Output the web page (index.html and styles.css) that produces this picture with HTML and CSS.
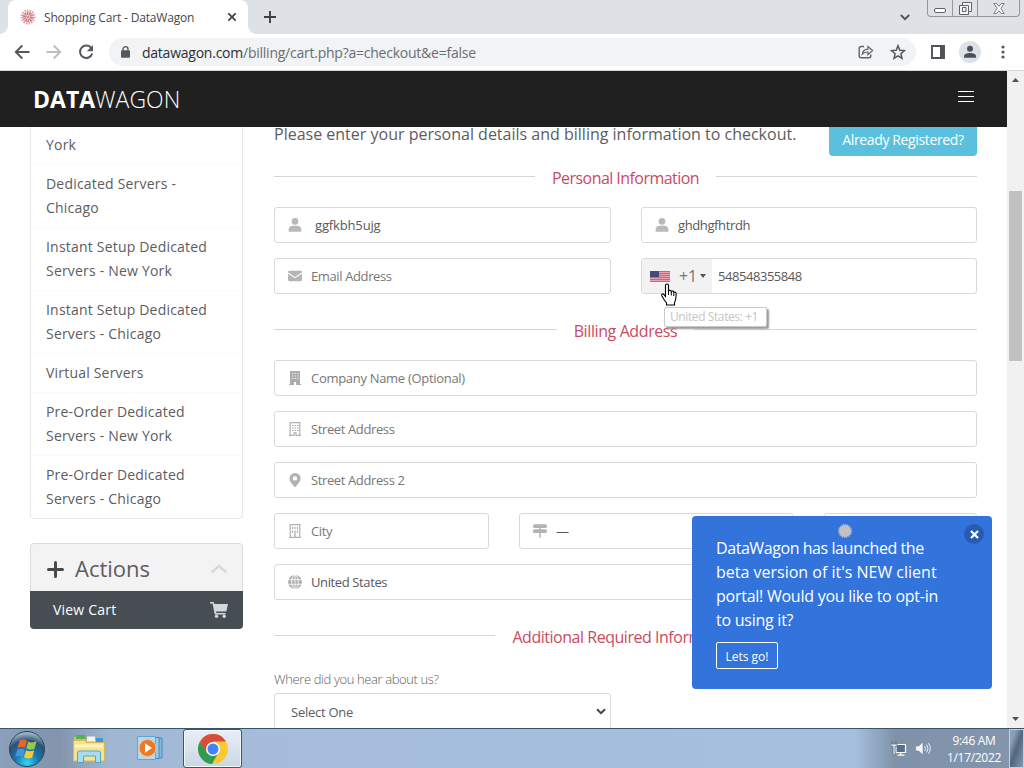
FILE: index.html
```html
<!DOCTYPE html>
<html lang="en">
<head>
    <meta charset="utf-8">
    <title>Shopping Cart - DataWagon</title>
    <link rel="stylesheet" href="styles.css">
</head>
<body>
    <div class="tabs">
        <div class="tab">
            <svg class="favicon" width="16" height="16" viewBox="0 0 16 16">
                <circle cx="8" cy="8" r="6.2" fill="none" stroke="#e3a0a6" stroke-width="2.6" stroke-dasharray="1.5 1"/>
                <circle cx="8" cy="8" r="3.6" fill="none" stroke="#d3737e" stroke-width="3" stroke-dasharray="1.6 .6"/>
                <circle cx="8" cy="8" r="1.8" fill="#dc8c95"/>
            </svg>
            <span class="tab-title">Shopping Cart - DataWagon</span>
            <svg class="tab-close" width="10" height="10" viewBox="0 0 10 10"><path d="M1.3 1.3l7.4 7.4M8.7 1.3L1.3 8.7" stroke="#3c4043" stroke-width="1.7"/></svg>
        </div>
        <svg class="new-tab" width="12" height="12" viewBox="0 0 12 12"><path d="M6 0v12M0 6h12" stroke="#3c4043" stroke-width="1.9"/></svg>
        <svg class="tab-search" width="10" height="7" viewBox="0 0 10 7"><path d="M.8 1l4.2 4.2L9.2 1" fill="none" stroke="#50545a" stroke-width="1.9"/></svg>
        <div class="window-buttons">
            <span class="win-min"><svg width="12" height="5" viewBox="0 0 12 5"><rect x=".5" y=".5" width="11" height="4" rx="1.5" fill="#fff" stroke="#5b626b"/></svg></span>
            <span class="win-max"><svg width="13" height="13" viewBox="0 0 13 13"><path d="M3.5.5h9v9h-3v3h-9v-9h3z" fill="#f4f5f7" stroke="#5b626b"/><path d="M3.5 3.5h6v6M3.5 5.5h3.5v4H3.5z" fill="none" stroke="#5b626b"/></svg></span>
            <span class="win-close"><svg width="12" height="11" viewBox="0 0 12 11"><path d="M.8.5h3L6 3.3 8.200.5h3L7.900 5.500l3.300 5h-3L6 7.700l-2.200 2.800h-3l3.300-5z" fill="#f8f9fa" stroke="#6f757d" stroke-width=".9"/></svg></span>
        </div>
    </div>

    <div class="toolbar">
        <svg class="nav-icon" width="16" height="16" viewBox="0 0 16 16"><path d="M15.500 8H2.500M8.300 1.500L1.800 8l6.500 6.500" fill="none" stroke="#54585d" stroke-width="1.900"/></svg>
        <svg class="nav-icon" width="16" height="16" viewBox="0 0 16 16"><path d="M.5 8h13M7.700 1.500L14.200 8l-6.500 6.500" fill="none" stroke="#bcbec1" stroke-width="1.900"/></svg>
        <svg class="nav-icon" width="16" height="16" viewBox="0 0 16 16"><path d="M13.300 4.200A6.200 6.200 0 1 0 14.200 9.500" fill="none" stroke="#54585d" stroke-width="2"/><path d="M15 1v6.200H8.800z" fill="#54585d"/></svg>
        <div class="address">
            <svg width="9" height="12" viewBox="0 0 9 12"><rect y="4.300" width="9" height="7.500" rx="1" fill="#54585d"/><path d="M2 5V3.200a2.500 2.500 0 0 1 5 0V5" fill="none" stroke="#54585d" stroke-width="1.300"/></svg>
            <span class="url"><span class="host">datawagon.com</span>/billing/cart.php?a=checkout&amp;e=false</span>
            <svg class="share" width="16" height="14" viewBox="0 0 16 14"><path d="M6 1.500H3.200A2 2 0 0 0 1.200 3.500v7.300a2 2 0 0 0 2 2h7.600a2 2 0 0 0 2-2V9.500" fill="none" stroke="#5f6368" stroke-width="1.400"/><path d="M4.300 9c.5-3.400 2.500-4.700 5.700-4.800V1.500L14.600 5.600 10 9.600V7C7.500 7 5.800 7.500 4.300 9z" fill="none" stroke="#5f6368" stroke-width="1.200"/></svg>
            <svg width="16" height="16" viewBox="0 0 16 16"><path d="M8 1.700l1.800 4.500 4.700.4-3.600 3.100 1.100 4.700L8 11.900l-4 2.500 1.100-4.700-3.600-3.100 4.700-.4z" fill="none" stroke="#54585d" stroke-width="1.500"/></svg>
        </div>
        <svg class="side-panel" width="14" height="14" viewBox="0 0 14 14"><path d="M1 1h12v12H1z" fill="none" stroke="#54505a" stroke-width="1.900"/><path d="M9 1h4v12H9z" fill="#54505a"/></svg>
        <svg class="profile" width="22" height="22" viewBox="0 0 22 22"><circle cx="11" cy="11" r="11" fill="#dde1e8"/><circle cx="11" cy="7.800" r="3" fill="#4b5159"/><path d="M5 16.800v-1.500c0-2.200 3-3.300 6-3.300s6 1.100 6 3.300v1.500z" fill="#4b5159"/></svg>
        <svg class="menu-dots" width="4" height="14" viewBox="0 0 4 14"><circle cx="2" cy="2" r="1.600" fill="#54585d"/><circle cx="2" cy="7" r="1.600" fill="#54585d"/><circle cx="2" cy="12" r="1.600" fill="#54585d"/></svg>
    </div>

    <div class="viewport">
        <div class="page">
            <header class="site-header">
                <div class="logo"><b>DATA</b>WAGON</div>
                <div class="burger"><i></i><i></i><i></i></div>
            </header>

            <div class="columns">
                <aside class="sidebar">
                    <ul class="categories">
                        <li class="first">York</li>
                        <li>Dedicated Servers - Chicago</li>
                        <li>Instant Setup Dedicated Servers - New York</li>
                        <li>Instant Setup Dedicated Servers - Chicago</li>
                        <li>Virtual Servers</li>
                        <li>Pre-Order Dedicated Servers - New York</li>
                        <li>Pre-Order Dedicated Servers - Chicago</li>
                    </ul>
                    <div class="actions">
                        <div class="actions-head">
                            <svg width="17" height="17" viewBox="0 0 17 17"><path d="M8.500 1.500v14M1.500 8.500h14" stroke="#4a4a4a" stroke-width="3" stroke-linecap="round"/></svg>
                            <span class="actions-title">Actions</span>
                            <svg width="18" height="10" viewBox="0 0 18 10"><path d="M1.500 8.500L9 2l7.500 6.500" fill="none" stroke="#d9d9d9" stroke-width="2.600"/></svg>
                        </div>
                        <div class="actions-item">
                            <span>View Cart</span>
                            <svg width="18" height="16" viewBox="0 0 18 16"><path d="M0 0h3.700l.5 2H18l-1.700 7.500H6l.3 1.500h9.200v1.500H4.800L2.500 1.600H0z" fill="#d5d7d9"/><circle cx="6.500" cy="14.200" r="1.700" fill="#d5d7d9"/><circle cx="14.200" cy="14.200" r="1.700" fill="#d5d7d9"/></svg>
                        </div>
                    </div>
                </aside>

                <main class="checkout">
                    <div class="intro">
                        <span class="intro-text">Please enter your personal details and billing information to checkout.</span>
                        <span class="btn-registered">Already Registered?</span>
                    </div>

                    <div class="section-title"><span class="title-personal">Personal Information</span></div>
                    <div class="fields two">
                        <div class="field name">
                            <svg width="13" height="14" viewBox="0 0 13 14"><circle cx="6.500" cy="3.400" r="3.300" fill="#b9b9b9"/><path d="M.2 13.800v-2.300C.2 9 2 7.800 4 7.800h5c2 0 3.800 1.200 3.800 3.700v2.300z" fill="#b9b9b9"/></svg>
                            <span class="filled">ggfkbh5ujg</span>
                        </div>
                        <div class="field">
                            <svg width="13" height="14" viewBox="0 0 13 14"><circle cx="6.500" cy="3.400" r="3.300" fill="#b9b9b9"/><path d="M.2 13.800v-2.300C.2 9 2 7.800 4 7.800h5c2 0 3.800 1.200 3.800 3.700v2.300z" fill="#b9b9b9"/></svg>
                            <span class="filled">ghdhgfhtrdh</span>
                        </div>
                        <div class="field">
                            <svg width="15" height="12" viewBox="0 0 15 12"><rect y=".5" width="15" height="11" rx="1.500" fill="#b5b5b5"/><path d="M0 2.800l7.500 5 7.500-5" fill="none" stroke="#fff" stroke-width="1.100"/></svg>
                            <span>Email Address</span>
                        </div>
                        <div class="field phone">
                            <div class="dial">
                                <svg width="20" height="11" viewBox="0 0 20 11"><rect width="20" height="11" fill="#e9a3ae"/><path d="M0 .5h20M0 2.500h20M0 4.500h20M0 6.500h20M0 8.500h20M0 10.500h20" stroke="#cf6478"/><rect width="9" height="6" fill="#474a78"/></svg>
                                <span class="dial-code">+1</span>
                                <svg width="6" height="4" viewBox="0 0 6 4"><path d="M0 0h6L3 4z" fill="#555"/></svg>
                            </div>
                            <span class="filled number">548548355848</span>
                            <svg class="cursor" width="18" height="23" viewBox="0 0 18 23"><path d="M5.500 13.500V2.500a1.500 1.500 0 0 1 3 0V8c.5-1 2.500-.8 2.800.5.7-.8 2.300-.5 2.500.8 1-.5 2.400 0 2.400 1.500 0 4-.2 6.200-1.700 9V22h-8v-2.200c-1.700-1.700-3.300-4.300-4.700-7-.7-1.500.7-2.500 2-1.500z" fill="#fff" stroke="#000" stroke-width="1.100"/><path d="M8.500 8v4M11.300 9v3.500M13.800 10v3" stroke="#000" stroke-width="1"/></svg>
                            <div class="tooltip">United States: +1</div>
                        </div>
                    </div>

                    <div class="section-title"><span class="title-billing">Billing Address</span></div>
                    <div class="fields">
                        <div class="field">
                            <svg width="12" height="14" viewBox="0 0 12 14"><path d="M0 13h1V0h10v13h1v1H7v-3H5v3H0z" fill="#adadad"/><path d="M3 2.500h1.500M5.500 2.500H7M8 2.500h1.500M3 5h1.500M5.500 5H7M8 5h1.500M3 7.500h1.500M5.500 7.500H7M8 7.500h1.500" stroke="#e6e6e6"/></svg>
                            <span class="company">Company Name (Optional)</span>
                        </div>
                        <div class="field">
                            <svg width="12" height="14" viewBox="0 0 12 14"><path d="M1.200 13V.700h9.600V13M0 13.300h5v-2.500h2v2.500h5" fill="none" stroke="#b2b2b2" stroke-width="1.200"/><path d="M3 3.500h1.500M5.500 3.500H7M8 3.500h1.500M3 6h1.500M5.500 6H7M8 6h1.500M3 8.500h1.500M5.500 8.500H7M8 8.500h1.500" stroke="#aaa" stroke-width="1.100"/></svg>
                            <span>Street Address</span>
                        </div>
                        <div class="field">
                            <svg width="11" height="14" viewBox="0 0 11 14"><path fill-rule="evenodd" d="M5.500 0A5.400 5.400 0 0 1 11 5.400C11 8 9.500 9.500 6.200 13.700q-.7.600-1.400 0C1.500 9.500 0 8 0 5.400A5.400 5.400 0 0 1 5.500 0zm0 3.200a2.200 2.200 0 1 0 0 4.400 2.200 2.200 0 0 0 0-4.400z" fill="#b2b2b2"/></svg>
                            <span>Street Address 2</span>
                        </div>
                        <div class="city-row">
                            <div class="field">
                                <svg width="12" height="14" viewBox="0 0 12 14"><path d="M1.200 13V.700h9.600V13M0 13.300h12" fill="none" stroke="#b2b2b2" stroke-width="1.200"/><path d="M3.500 2.800v2.500M6 2.800v2.500M8.500 2.800v2.500M3.500 6.500V9M8.500 6.500V9M6 6.500V13" stroke="#b2b2b2" stroke-width="1.300"/></svg>
                                <span>City</span>
                            </div>
                            <div class="field">
                                <svg width="14" height="14" viewBox="0 0 14 14"><rect y=".3" width="14" height="3.700" rx="1.600" fill="#b3b3b3"/><rect y="5.300" width="14" height="3.700" rx="1.600" fill="#b3b3b3"/><path d="M7 3.500v10.300" stroke="#b3b3b3" stroke-width="1.500"/></svg>
                                <span class="filled">—</span>
                            </div>
                            <div class="field"></div>
                        </div>
                        <div class="field">
                            <svg width="14" height="14" viewBox="0 0 14 14"><circle cx="7" cy="7" r="7" fill="#b0b0b0"/><path d="M0 4.700h14M0 9.300h14M7 0v14" stroke="#fff" stroke-width=".8"/><ellipse cx="7" cy="7" rx="3.300" ry="7" fill="none" stroke="#fff" stroke-width=".8"/></svg>
                            <span class="filled">United States</span>
                        </div>
                    </div>

                    <div class="section-title"><span>Additional Required Information</span></div>
                    <div class="question">Where did you hear about us?</div>
                    <div class="select">
                        <span>Select One</span>
                        <svg width="10" height="7" viewBox="0 0 10 7"><path d="M1 1.200l4 4 4-4" fill="none" stroke="#444" stroke-width="2"/></svg>
                    </div>
                </main>
            </div>
        </div>

        <div class="scrollbar">
            <svg width="7" height="4" viewBox="0 0 7 4"><path d="M0 4h7L3.500 0z" fill="#505050"/></svg>
            <div class="thumb"></div>
            <svg class="down" width="7" height="4" viewBox="0 0 7 4"><path d="M0 0h7L3.500 4z" fill="#505050"/></svg>
        </div>

        <div class="toast">
            <svg class="toast-spinner" width="14" height="14" viewBox="0 0 14 14"><circle cx="7" cy="7" r="6" fill="#bfc1c4"/><circle cx="7" cy="7" r="6.300" fill="none" stroke="#bfc1c4" stroke-width="1.400" stroke-dasharray="1.300 1.100"/></svg>
            <div class="toast-close"><svg width="9" height="9" viewBox="0 0 9 9"><path d="M1 1l7 7M8 1L1 8" stroke="#fff" stroke-width="2.200"/></svg></div>
            <p><span class="tighter">DataWagon has launched the</span><br>beta version of it's NEW client<br><span class="tight">portal! Would you like to opt-in</span><br><span class="tight">to using it?</span></p>
            <span class="toast-button">Lets go!</span>
        </div>
    </div>

    <div class="taskbar">
        <svg class="start" width="38" height="38" viewBox="0 0 38 38">
            <defs>
                <radialGradient id="orb" cx=".5" cy=".9" r=".85"><stop offset="0" stop-color="#35d8f5"/><stop offset=".4" stop-color="#1577b0"/><stop offset=".75" stop-color="#2d5172"/><stop offset="1" stop-color="#9db3c4"/></radialGradient>
            </defs>
            <circle cx="19" cy="19" r="17.500" fill="url(#orb)" stroke="#27445d"/>
            <path d="M11.500 10.500c3-1.500 5.500-1.200 7.500.2l-2 7.300c-2.300-1.200-4.500-1.200-7.500 0z" fill="#e9622c"/>
            <path d="M20.200 11.500c2.500 1.300 5 1.300 8.300-.2l-2 7.400c-3 1.300-5.500 1.300-8.200-.1z" fill="#96c84c"/>
            <path d="M9.200 19.500c3-1.300 5.200-1.200 7.500.1l-2 7.300c-2.500-1.400-4.700-1.300-7.500 0z" fill="#3f96dc"/>
            <path d="M18 20.200c2.500 1.300 5 1.300 8.200 0l-2 7.300c-3 1.400-5.500 1.200-8.200-.2z" fill="#fbc739"/>
        </svg>
        <svg class="explorer" width="34" height="30" viewBox="0 0 34 30">
            <path d="M2 3h10l2 3h15v3H2z" fill="#dfba58"/><path d="M4 1h9v4H4z" fill="#58b04e"/><path d="M15 2.500h8v5h-8z" fill="#f0f5e8"/><path d="M24 4h7v4h-7z" fill="#4795ce"/>
            <path d="M1.500 6.500h11l2 2h18V27h-31z" fill="#f5e391" stroke="#d8b85c"/>
            <path d="M3 12h28" stroke="#fbf4bf" stroke-width="3"/>
            <path d="M5.500 28.500V19q0-2 2-2h19q2 0 2 2v9.500h-5V22h-12v6.500z" fill="#a6ddf3" stroke="#51a5cc"/>
        </svg>
        <svg class="player" width="28" height="26" viewBox="0 0 28 26">
            <path d="M8 2h17v20H8z" fill="#83b9de" stroke="#438bbb"/><path d="M5 1.500h17v21H5z" fill="#9dcbe9" stroke="#438bbb"/><path d="M.5.500h18v23H.500z" fill="#b7d8ed" stroke="#66a2c9"/>
            <circle cx="10.500" cy="12" r="8.500" fill="#ea7a25" stroke="#fbc08a"/><path d="M8 7.300v9.400l7-4.700z" fill="#fff"/>
        </svg>
        <div class="running">
            <svg width="30" height="30" viewBox="0 0 30 30">
                <circle cx="15" cy="15" r="15" fill="#fbc934"/>
                <path d="M15 15L2 7.500A15 15 0 0 1 28 7.500H15z" fill="#d94b3c"/>
                <path d="M2 7.500A15 15 0 0 0 14 30l6.500-11.500L15 15l-6 3.500z" fill="#2f9c52"/>
                <path d="M2 7.500L8.700 18.800 15 8z" fill="#d94b3c"/>
                <circle cx="15" cy="15" r="7" fill="#fff"/><circle cx="15" cy="15" r="5.500" fill="#4285f4"/>
            </svg>
        </div>
        <div class="tray">
            <svg width="16" height="15" viewBox="0 0 16 15"><path d="M5 3.500h9.500v8H5z" fill="#53708a" stroke="#fff" stroke-width="1.200"/><path d="M9.500 12v1.500M6.500 14.200h7" stroke="#fff" stroke-width="1.300"/><path d="M1 0v2.500M5 0v2.500M0 3h6v2.500H4V14h-2V5.500H0z" fill="#dbe4ec" stroke="#4d6075" stroke-width=".6"/></svg>
            <svg width="16" height="15" viewBox="0 0 16 15"><path d="M.7 5h3L8 1v13l-4.300-4H.700z" fill="#f4f6f8" stroke="#6a7a8c" stroke-width=".5"/><path d="M9.800 5.200q1.600 2.300 0 4.600M11.700 3.700q2.600 3.800 0 7.600M13.500 2.200q3.600 5.300 0 10.600" fill="none" stroke="#edf1f5" stroke-width="1"/></svg>
            <div class="clock"><span class="time">9:46 AM</span><span class="date">1/17/2022</span></div>
            <div class="show-desktop"></div>
        </div>
    </div>
</body>
</html>
```
FILE: styles.css
```css
* {
    box-sizing: border-box;
}

body {
    margin: 0;
    width: 1024px;
    height: 768px;
    overflow: hidden;
    display: flex;
    flex-direction: column;
    font-family: "Open Sans", "Noto Sans", sans-serif;
    font-size: 14px;
    color: #5c5d5f;
    background: #fff;
}

svg {
    flex: none;
    display: block;
}

/* browser chrome */
.tabs {
    height: 34px;
    display: flex;
    align-items: center;
    background: #dee1e6;
}

.tab {
    position: relative;
    width: 240px;
    height: 34px;
    margin-left: 8px;
    padding: 0 11px 0 12px;
    display: flex;
    align-items: center;
    background: #fff;
    border-radius: 8px 8px 0 0;
}

/* curved feet of the active tab */
.tab::before,
.tab::after {
    content: "";
    position: absolute;
    bottom: 0;
    width: 8px;
    height: 8px;
}

.tab::before {
    left: -8px;
    background: radial-gradient(circle at 0 0, transparent 7.5px, #fff 8px);
}

.tab::after {
    right: -8px;
    background: radial-gradient(circle at 100% 0, transparent 7.5px, #fff 8px);
}

.tab-title {
    flex: 1;
    margin-left: 8px;
    font-size: 12px;
    letter-spacing: -0.17px;
    color: #45484c;
    white-space: nowrap;
}

.new-tab {
    margin-left: 16px;
}

.tab-search {
    margin-left: auto;
    margin-right: 17px;
}

.window-buttons {
    align-self: flex-start;
    width: 93px;
    height: 17px;
    margin-right: 4px;
    display: flex;
    border: 1px solid #92979f;
    border-top: 0;
    border-radius: 0 0 4px 4px;
}

.window-buttons span {
    display: flex;
    align-items: center;
    justify-content: center;
}

.win-min {
    width: 24px;
    padding-top: 4px;
}

.win-max {
    width: 26px;
    border-left: 1px solid #92979f;
    border-right: 1px solid #92979f;
}

.win-close {
    flex: 1;
}

.toolbar {
    height: 37px;
    padding-left: 14px;
    display: flex;
    align-items: center;
    background: #fff;
    border-bottom: 1px solid #d5d7da;
}

.nav-icon {
    margin-right: 16px;
}

.address {
    width: 807px;
    height: 28px;
    margin-left: -1px;
    padding: 0 10px 0 12px;
    display: flex;
    align-items: center;
    background: #f1f3f4;
    border-radius: 14px;
}

.url {
    flex: 1;
    margin-left: 12px;
    font-size: 14px;
    letter-spacing: -0.24px;
    color: #6a6e73;
}

.host {
    color: #2c2f33;
}

.share {
    margin-right: 16px;
}

.side-panel {
    margin-left: 15px;
}

.profile {
    margin-left: 14px;
}

.menu-dots {
    margin-left: 20px;
}

/* page */
.viewport {
    position: relative;
    height: 657px;
    display: flex;
    overflow: hidden;
}

.page {
    width: 1007px;
}

.site-header {
    height: 56px;
    padding: 0 33px;
    display: flex;
    align-items: center;
    justify-content: space-between;
    background: #202020;
}

.logo {
    font-size: 23px;
    font-weight: 300;
    color: #fff;
}

.logo b {
    font-weight: 700;
}

.burger {
    width: 16px;
    height: 11px;
    margin-bottom: 6px;
    display: flex;
    flex-direction: column;
    justify-content: space-between;
}

.burger i {
    height: 1px;
    background: #fff;
}

.columns {
    display: flex;
    gap: 31px;
    padding-left: 30px;
}

.sidebar {
    width: 213px;
    letter-spacing: 0.2px;
}

.categories {
    margin: 0 0 24px;
    padding: 0;
    list-style: none;
    border: 1px solid #e8e8e8;
    border-top: 0;
    border-radius: 0 0 4px 4px;
}

.categories li {
    padding: 7px 15px;
    line-height: 24px;
    border-bottom: 1px solid #fafafa;
}

.categories li.first {
    padding-top: 6px;
}

.categories li:last-child {
    border-bottom: 0;
}

.actions {
    border-radius: 4px;
    overflow: hidden;
}

.actions-head {
    height: 48px;
    padding: 3px 14px 0 16px;
    display: flex;
    align-items: center;
    background: #f3f3f3;
    border: 1px solid #dcdcdc;
    border-bottom: 0;
    border-radius: 4px 4px 0 0;
}

.actions-title {
    flex: 1;
    margin-left: 11px;
    padding-bottom: 3px;
    font-size: 22px;
    letter-spacing: 0;
}

.actions-item {
    height: 38px;
    padding: 0 15px 1px 23px;
    display: flex;
    align-items: center;
    justify-content: space-between;
    color: #fff;
    background: #464d53;
}

.checkout {
    width: 703px;
}

.intro {
    height: 38px;
    display: flex;
    align-items: flex-start;
    justify-content: space-between;
    white-space: nowrap;
}

.intro-text {
    margin-top: -5px;
    font-size: 16px;
    line-height: 24px;
}

.btn-registered {
    width: 148px;
    height: 29px;
    line-height: 25px;
    text-align: center;
    font-size: 14px;
    letter-spacing: -0.37px;
    color: #fff;
    background: #5bc0de;
    border-radius: 0 0 4px 4px;
}

.section-title {
    height: 27px;
    margin: 24px 0 15px;
    padding-bottom: 2px;
    display: flex;
    align-items: center;
    gap: 17px;
    font-size: 16px;
    letter-spacing: -0.47px;
    color: #cb4a61;
    white-space: nowrap;
}

.intro + .section-title {
    margin-top: 0;
}

.title-personal {
    letter-spacing: -0.55px;
}

.title-billing {
    letter-spacing: -0.4px;
}

.section-title::before,
.section-title::after {
    content: "";
    flex: 1;
    height: 1px;
    margin-bottom: 2px;
    background: #d6d6d6;
}

.fields {
    display: grid;
    gap: 15px;
}

.fields.two {
    grid-template-columns: 337px 336px;
    column-gap: 30px;
}

.city-row {
    display: grid;
    grid-template-columns: 215px 275px 153px;
    gap: 30px;
}

.field {
    position: relative;
    height: 36px;
    padding-left: 13px;
    display: flex;
    align-items: center;
    font-size: 13px;
    letter-spacing: -0.38px;
    color: #777;
    border: 1px solid #d9d9d9;
    border-radius: 3px;
}

.field > svg:first-child {
    width: 14px;
    margin-right: 9px;
}

.filled {
    color: #58595b;
}

.company {
    letter-spacing: -0.3px;
}

.name .filled {
    margin-left: 4px;
    letter-spacing: -0.15px;
}

.phone {
    padding-left: 0;
}

.dial {
    width: 70px;
    height: 34px;
    padding-left: 8px;
    display: flex;
    align-items: center;
    background: #f2f2f2;
}

.dial-code {
    margin: 0 3px 0 9px;
    font-size: 16px;
    letter-spacing: -0.2px;
}

.number {
    margin-left: 6px;
    letter-spacing: -0.45px;
}

.cursor {
    position: absolute;
    left: 18px;
    top: 24px;
    z-index: 2;
}

.tooltip {
    position: absolute;
    left: 22px;
    top: 48px;
    width: 103px;
    height: 20px;
    line-height: 18px;
    padding-left: 5px;
    font-size: 12px;
    letter-spacing: -0.4px;
    white-space: nowrap;
    color: #c6c6c6;
    background: #fff;
    border: 1px solid #c9c9c9;
    border-radius: 2px;
    box-shadow: 2px 2px 2px #999;
}

.question {
    margin-top: 19px;
    height: 19px;
    line-height: 18px;
    font-size: 13px;
    font-weight: 300;
    letter-spacing: -0.39px;
}

.select {
    height: 50px;
    width: 337px;
    margin-top: 4px;
    padding: 1px 4px 14px 16px;
    display: flex;
    align-items: center;
    justify-content: space-between;
    font-size: 13px;
    letter-spacing: -0.25px;
    border: 1px solid #d9d9d9;
    border-radius: 3px;
}

.scrollbar {
    width: 17px;
    padding-top: 7px;
    display: flex;
    flex-direction: column;
    align-items: center;
    background: #f1f1f1;
}

.thumb {
    width: 13px;
    height: 170px;
    margin-top: 109px;
    background: #c1c1c1;
}

.down {
    margin-top: auto;
    margin-bottom: 7px;
}

/* popup over the page */
.toast {
    position: absolute;
    left: 692px;
    top: 445px;
    width: 300px;
    height: 173px;
    padding: 20px 24px;
    color: #fff;
    background: #3273dc;
    border-radius: 4px;
}

.toast p {
    margin: 0 0 10px;
    font-size: 16px;
    line-height: 24px;
    white-space: nowrap;
}

.tight {
    letter-spacing: -0.25px;
}

.tighter {
    letter-spacing: -0.43px;
}

.toast-spinner {
    position: absolute;
    left: 146px;
    top: 8px;
}

.toast-close {
    position: absolute;
    right: 8px;
    top: 8px;
    width: 20px;
    height: 20px;
    display: flex;
    align-items: center;
    justify-content: center;
    background: #285cb0;
    border-radius: 50%;
}

.toast-button {
    display: block;
    width: 62px;
    height: 27px;
    line-height: 27px;
    text-align: center;
    font-size: 12px;
    border: 1px solid #fff;
    border-radius: 2px;
}

/* taskbar */
.taskbar {
    height: 40px;
    display: flex;
    align-items: center;
    border-top: 1px solid #36526f;
    background: linear-gradient(90deg, #8ba0ba 0, #8394ab 60px, #a0b7d3 110px, #a5bddb 260px, #a5bfde 855px, #7f92a9 895px, #8496ad 1024px);
}

.start {
    margin-left: 8px;
}

.explorer {
    margin-left: 26px;
}

.player {
    margin-left: 31px;
}

.running {
    width: 59px;
    height: 39px;
    margin-left: 18px;
    display: flex;
    align-items: center;
    justify-content: center;
    background: linear-gradient(#e9eef5, #c9d7e7);
    border: 1px solid #41546c;
    border-radius: 3px;
    box-shadow: inset 0 0 0 1px #f6f9fc;
}

.tray {
    flex: 1;
    height: 39px;
    display: flex;
    align-items: center;
    justify-content: flex-end;
    gap: 8px;
    color: #fff;
}

.clock {
    width: 62px;
    margin-left: 4px;
    margin-right: -4px;
    display: flex;
    flex-direction: column;
    align-items: center;
    font-size: 12px;
    line-height: 17px;
    letter-spacing: -0.3px;
}

.show-desktop {
    width: 15px;
    height: 39px;
    background: linear-gradient(110deg, #8d9fb4 20%, #51667f 50%, #8798ad);
    border: 1px solid #c5d0dc;
}
```
